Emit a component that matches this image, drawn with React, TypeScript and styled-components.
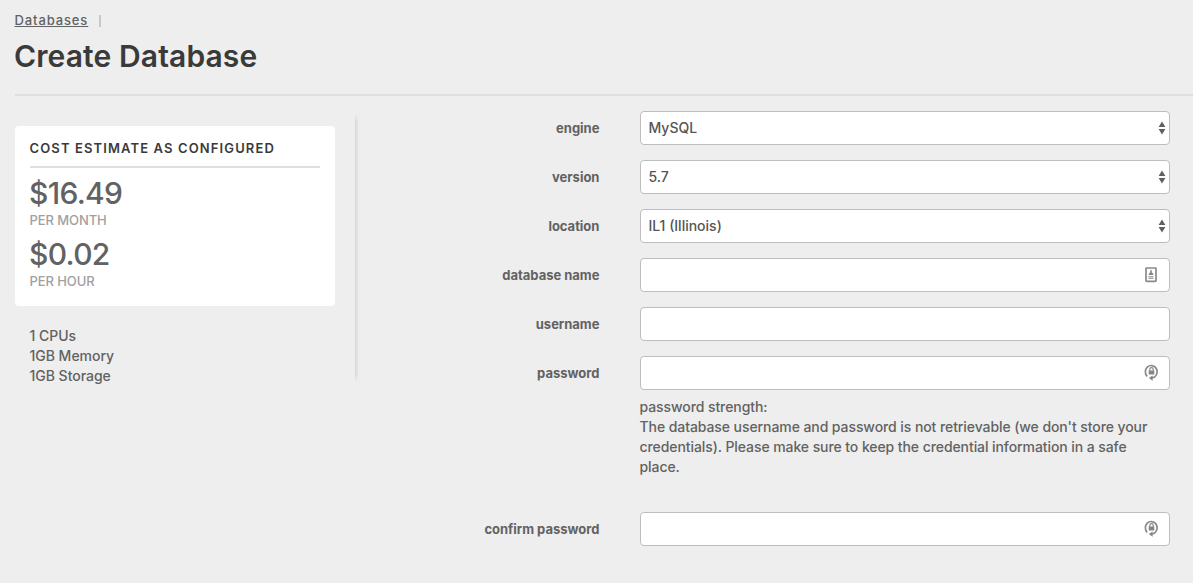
import React from "react";
import styled, { createGlobalStyle } from "styled-components";

const GlobalStyle = createGlobalStyle`
  * { box-sizing: border-box; }
  body {
    margin: 0;
    background: #eeeeee;
    color: #626262;
    font: 450 14px/20px Inter, "Liberation Sans", sans-serif;
    letter-spacing: -0.02px;
    overflow: hidden;
  }
`;

const Page = styled.main`
  height: 583px;
  padding-left: 15px;
`;

const Header = styled.header`
  height: 96px;
  padding-top: 10px;
  border-bottom: 2px solid #dfdfdf;
`;

const Breadcrumb = styled.nav`
  display: flex;
  align-items: center;
  height: 20px;
  margin-left: -0.5px;
  font-size: 13px;
`;

const Crumb = styled.a`
  color: #626262;
  letter-spacing: 0.88px;
  text-decoration: underline;
`;

const CrumbDivider = styled.span`
  width: 2px;
  height: 12px;
  margin: 2px 0 0 11px;
  background: #c8c8cc;
`;

const Title = styled.h1`
  margin: 6px 0 0 -1px;
  color: #3a3a3a;
  font-size: 30px;
  line-height: 40px;
  font-weight: 600;
  letter-spacing: 0.12px;
`;

const Columns = styled.div`
  display: flex;
  align-items: flex-start;
`;

const Sidebar = styled.aside`
  width: 320px;
  padding-top: 30px;
`;

const Card = styled.section`
  height: 180px;
  padding: 12px 15px 0;
  border-radius: 4px;
  background: #ffffff;
`;

const CardTitle = styled.h2`
  height: 30px;
  margin: 0;
  border-bottom: 2px solid #dfdfdf;
  color: #3a3a3a;
  font-size: 13px;
  line-height: 21px;
  font-weight: 600;
  letter-spacing: 1.12px;
  text-indent: -0.5px;
  white-space: nowrap;
`;

const Cost = styled.div`
  height: 61px;
  padding-top: 5px;
`;

const Amount = styled.div`
  font-size: 30px;
  line-height: 40px;
  letter-spacing: -0.7px;
  text-indent: -1px;
`;

const Period = styled.div`
  margin-top: -3px;
  color: #a0a0a0;
  font-size: 13px;
  line-height: 20px;
  letter-spacing: -0.08px;
  text-indent: -0.5px;
  text-transform: uppercase;
`;

const Specs = styled.ul`
  margin: 20px 0 0;
  padding: 0 14.5px;
  list-style: none;
`;

const Divider = styled.div`
  width: 4px;
  height: 268px;
  margin: 18px 0 0 20px;
  background: linear-gradient(to right, #d6d6d6, #e2e2e2 50%, #eeeeee);
  mask-image: linear-gradient(to bottom, transparent, #000 8px, #000 260px, transparent);
`;

const Form = styled.form`
  display: flex;
  flex-direction: column;
  gap: 15px;
  width: 811px;
  padding-top: 15px;
`;

const Row = styled.div`
  display: grid;
  grid-template-columns: 241px 530px;
  column-gap: 40px;
`;

const Label = styled.label`
  padding: 7px 0.6px 0 0;
  font-size: 13px;
  font-weight: 650;
  text-align: right;
`;

const Control = styled.div`
  position: relative;
  height: 34px;
`;

const Input = styled.input`
  display: block;
  width: 100%;
  height: 34px;
  padding: 0 8px;
  border: 1px solid #bdbdbd;
  border-radius: 4px;
  outline: none;
  background: #ffffff;
  color: #555555;
  font: inherit;
`;

const Select = styled.select`
  display: block;
  width: 100%;
  height: 34px;
  padding: 0 7.5px;
  border: 1px solid #bdbdbd;
  border-radius: 4px;
  appearance: none;
  background: #ffffff;
  color: #555555;
  font: inherit;
`;

const Adornment = styled.svg<{ $right: number; $top: number }>`
  position: absolute;
  right: ${(p) => p.$right}px;
  top: ${(p) => p.$top}px;
  pointer-events: none;
`;

const Help = styled.p`
  margin: 7px 0 0 -0.5px;
  width: 530px;
  letter-spacing: -0.08px;
`;

const PasswordGroup = styled.div`
  margin-bottom: 20px;
`;

const Steppers = () => (
  <Adornment $right={4} $top={10} width="8" height="14" viewBox="0 0 8 14" fill="#606060">
    <path d="M4 .6 7.4 6H.6zM4 13.4.6 8h6.8z" />
  </Adornment>
);

const CardIcon = () => (
  <Adornment $right={13} $top={9} width="12" height="16" viewBox="0 0 12 16">
    <rect x="1" y="1" width="10" height="13.4" rx="0.6" fill="#fff" stroke="#8a8a8a" strokeWidth="1.7" />
    <path d="M5.2 3.2h1.6v2.2l1.4 1.2v1.4H3.8V6.6l1.4-1.2z" fill="#858585" />
    <path d="M3.5 9.6h5M3.5 11.4h5" stroke="#a8a8a8" strokeWidth="1.1" />
  </Adornment>
);

const LockIcon = () => (
  <Adornment $right={11} $top={8} width="15" height="17" viewBox="0 0 15 17" fill="none">
    <path d="M3.2 12.4A5.9 6.3 0 1 1 10.6 13L8 14" stroke="#8a8a8a" strokeWidth="1.7" />
    <path d="M8.6 11.4v5.4l-3.8-2.7z" fill="#858585" />
    <path d="M5.8 7V5.4a1.7 1.7 0 0 1 3.4 0V7" stroke="#8a8a8a" strokeWidth="1.2" />
    <rect x="4.7" y="6.4" width="5.6" height="4" rx="0.4" fill="#858585" />
  </Adornment>
);

const costs = [
  { amount: "$16.49", period: "per month" },
  { amount: "$0.02", period: "per hour" },
];

const selects = [
  { id: "engine", value: "MySQL" },
  { id: "version", value: "5.7" },
  { id: "location", value: "IL1 (Illinois)" },
];

export default function App() {
  return (
    <Page>
      <GlobalStyle />
      <Header>
        <Breadcrumb>
          <Crumb>Databases</Crumb>
          <CrumbDivider />
        </Breadcrumb>
        <Title>Create Database</Title>
      </Header>
      <Columns>
        <Sidebar>
          <Card>
            <CardTitle>COST ESTIMATE AS CONFIGURED</CardTitle>
            {costs.map((c) => (
              <Cost key={c.period}>
                <Amount>{c.amount}</Amount>
                <Period>{c.period}</Period>
              </Cost>
            ))}
          </Card>
          <Specs>
            <li>1 CPUs</li>
            <li>1GB Memory</li>
            <li>1GB Storage</li>
          </Specs>
        </Sidebar>
        <Divider />
        <Form>
          {selects.map((s) => (
            <Row key={s.id}>
              <Label htmlFor={s.id}>{s.id}</Label>
              <Control>
                <Select id={s.id}>
                  <option>{s.value}</option>
                </Select>
                <Steppers />
              </Control>
            </Row>
          ))}
          <Row>
            <Label htmlFor="name">database name</Label>
            <Control>
              <Input id="name" />
              <CardIcon />
            </Control>
          </Row>
          <Row>
            <Label htmlFor="username">username</Label>
            <Control>
              <Input id="username" />
            </Control>
          </Row>
          <Row>
            <Label htmlFor="password">password</Label>
            <PasswordGroup>
              <Control>
                <Input id="password" type="password" />
                <LockIcon />
              </Control>
              <Help>
                password strength:
                <br />
                The database username and password is not retrievable (we don't store your
                credentials). Please make sure to keep the credential information in a safe place.
              </Help>
            </PasswordGroup>
          </Row>
          <Row>
            <Label htmlFor="confirm">confirm password</Label>
            <Control>
              <Input id="confirm" type="password" />
              <LockIcon />
            </Control>
          </Row>
        </Form>
      </Columns>
    </Page>
  );
}
